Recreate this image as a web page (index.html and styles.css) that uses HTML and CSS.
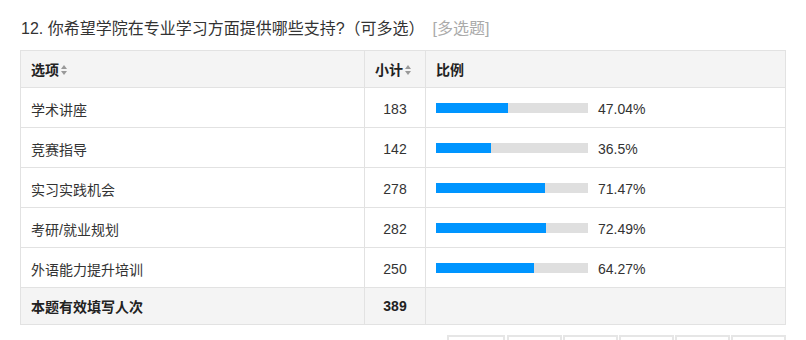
FILE: index.html
```html
<!DOCTYPE html>
<html lang="zh-CN">
<head>
<meta charset="utf-8">
<link rel="stylesheet" href="styles.css">
</head>
<body>
<div class="page">
  <div class="title">12. 你希望学院在专业学习方面提供哪些支持?（可多选）<span class="type">[多选题]</span></div>
  <div class="grid">
    <div class="cell head">选项<svg class="sort" width="6" height="10" viewBox="0 0 6 10"><path d="M3 0 L6 4 L0 4 Z M0 6 L6 6 L3 10 Z" fill="#999"/></svg></div>
    <div class="cell head">小计<svg class="sort" width="6" height="10" viewBox="0 0 6 10"><path d="M3 0 L6 4 L0 4 Z M0 6 L6 6 L3 10 Z" fill="#999"/></svg></div>
    <div class="cell head">比例</div>

    <div class="cell row">学术讲座</div>
    <div class="cell row num">183</div>
    <div class="cell row ratio"><div class="track"><div class="fill" style="width:47.04%"></div></div><span class="pct">47.04%</span></div>

    <div class="cell row">竞赛指导</div>
    <div class="cell row num">142</div>
    <div class="cell row ratio"><div class="track"><div class="fill" style="width:36.5%"></div></div><span class="pct">36.5%</span></div>

    <div class="cell row">实习实践机会</div>
    <div class="cell row num">278</div>
    <div class="cell row ratio"><div class="track"><div class="fill" style="width:71.47%"></div></div><span class="pct">71.47%</span></div>

    <div class="cell row">考研/就业规划</div>
    <div class="cell row num">282</div>
    <div class="cell row ratio"><div class="track"><div class="fill" style="width:72.49%"></div></div><span class="pct">72.49%</span></div>

    <div class="cell row">外语能力提升培训</div>
    <div class="cell row num">250</div>
    <div class="cell row ratio"><div class="track"><div class="fill" style="width:64.27%"></div></div><span class="pct">64.27%</span></div>

    <div class="cell foot">本题有效填写人次</div>
    <div class="cell foot num">389</div>
    <div class="cell foot"></div>
  </div>
  <div class="pager">
    <div class="pbtn first"></div>
    <div class="pbtn"></div>
    <div class="pbtn"></div>
    <div class="pbtn"></div>
    <div class="pbtn"></div>
    <div class="pbtn"></div>
  </div>
</div>
</body>
</html>
```

FILE: styles.css
```css
html, body {
  margin: 0;
  padding: 0;
  background: #fff;
}
body {
  font-family: "Liberation Sans", "Noto Sans CJK SC", sans-serif;
  color: #333;
  font-size: 14px;
  overflow: hidden;
}
.page {
  padding: 19px 20px 0 20px;
}
.title {
  font-size: 16px;
  line-height: 20px;
  height: 20px;
  padding-left: 1px;
  margin-bottom: 11px;
  color: #333;
  white-space: nowrap;
}
.type {
  color: #aaa;
  margin-left: 8px;
}
.grid {
  display: grid;
  grid-template-columns: 344px 61px 360px;
  width: 766px;
  box-sizing: border-box;
  border-left: 1px solid #e2e2e2;
  border-top: 1px solid #e2e2e2;
}
.cell {
  box-sizing: border-box;
  border-right: 1px solid #e2e2e2;
  border-bottom: 1px solid #e2e2e2;
  display: flex;
  align-items: center;
  padding: 0 10px;
  white-space: nowrap;
}
.head {
  height: 37px;
  background: #f4f4f4;
  font-weight: bold;
  color: #222;
}
.sort {
  margin-left: 2px;
  margin-top: 1px;
}
.row {
  height: 40px;
  padding-top: 2px;
  background: #fff;
}
.foot {
  height: 37px;
  background: #f4f4f4;
  font-weight: bold;
  color: #222;
}
.num {
  justify-content: center;
  padding-left: 0;
  padding-right: 0;
}
.ratio {
  gap: 10px;
}
.track {
  width: 152px;
  height: 10px;
  margin-top: -2px;
  background: #dfdfdf;
  flex: none;
}
.fill {
  height: 10px;
  background: #0095ff;
}
.pct {
  color: #333;
}
.pager {
  display: flex;
  justify-content: flex-end;
  gap: 1px;
  width: 766px;
  margin-top: 10px;
}
.pbtn {
  width: 55px;
  height: 30px;
  box-sizing: border-box;
  border: 2px solid #e6e6e6;
}
.pbtn.first {
  width: 58px;
  margin-right: 1px;
}
```
